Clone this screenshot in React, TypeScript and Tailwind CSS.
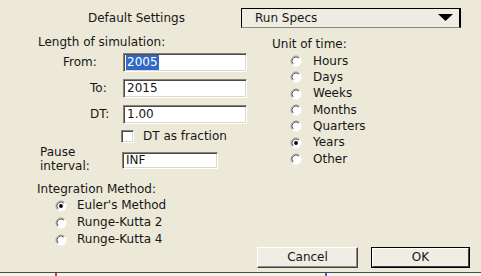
import React from "react";

function Radio({ checked = false }: { checked?: boolean }) {
  return (
    <svg width="12" height="12" viewBox="0 0 12 12" className="shrink-0">
      <circle cx="6" cy="6" r="5.5" fill="#ffffff" />
      <path d="M2.46 9.54 A5 5 0 1 1 9.54 2.46" stroke="#9a9890" strokeWidth="1" fill="none" />
      <path d="M3.17 8.83 A4 4 0 1 1 8.83 3.17" stroke="#5a5a58" strokeWidth="1" fill="none" />
      {checked && <circle cx="6" cy="6" r="1.9" fill="#000" />}
    </svg>
  );
}

function Field({ value, w, h, selected = false }: { value: string; w: string; h: string; selected?: boolean }) {
  return (
    <div
      className={`${w} ${h} bg-white border border-t-[#86837a] border-l-[#86837a] border-r-white border-b-white shadow-[inset_1px_1px_0_#4a4a4a,inset_-1px_-1px_0_#dcd9cc] flex items-center pl-[2px] leading-[15px]`}
    >
      {selected ? (
        <span className="bg-[#3169c6] text-white px-[1px]">{value}</span>
      ) : (
        <span className="px-[1px]">{value}</span>
      )}
    </div>
  );
}

export default function App() {
  return (
    <div className="w-[481px] h-[276px] bg-[#ece9d8] flex flex-col font-['DejaVu_Sans',sans-serif] text-[12px] text-[#161616] overflow-hidden">
      {/* top row */}
      <div className="mt-[8px] h-[20px] flex items-center">
        <div className="ml-[88px] w-[153px] leading-[15px]">Default Settings</div>
        <div className="w-[220px] h-[20px] bg-[#efede3] border-t border-l border-black border-r-2 border-r-black border-b border-b-[#8a877d] flex items-center justify-between pl-[13px] pr-[6px]">
          <span className="leading-[15px]">Run Specs</span>
          <svg width="15" height="8" viewBox="0 0 15 8">
            <polygon points="0,0 15,0 7.5,7" fill="#000" />
          </svg>
        </div>
      </div>

      {/* main */}
      <div className="mt-[7px] flex-1 flex">
        {/* left column */}
        <div className="w-[257px] flex flex-col">
          <div className="pl-[38px] leading-[15px]">Length of simulation:</div>
          <div className="mt-[3px] h-[19px] flex items-center">
            <div className="w-[123px] pl-[63px] leading-[15px]">From:</div>
            <Field value="2005" w="w-[124px]" h="h-[19px]" selected />
          </div>
          <div className="mt-[7px] h-[19px] flex items-center">
            <div className="w-[123px] pl-[90px] leading-[15px]">To:</div>
            <Field value="2015" w="w-[124px]" h="h-[19px]" />
          </div>
          <div className="mt-[7px] h-[19px] flex items-center">
            <div className="w-[123px] pl-[90px] leading-[15px]">DT:</div>
            <Field value="1.00" w="w-[124px]" h="h-[19px]" />
          </div>
          <div className="mt-[6px] h-[13px] flex items-center">
            <div className="ml-[121px] w-[13px] h-[13px] bg-white border border-t-[#86837a] border-l-[#86837a] border-r-white border-b-white shadow-[inset_1px_1px_0_#4a4a4a,inset_-1px_-1px_0_#dcd9cc]" />
            <span className="ml-[9px] leading-[15px]">DT as fraction</span>
          </div>
          <div className="mt-[2px] flex items-start">
            <div className="w-[122px] pl-[40px] leading-[14px]">
              <div>Pause</div>
              <div>interval:</div>
            </div>
            <div className="mt-[7px]">
              <Field value="INF" w="w-[96px]" h="h-[17px]" />
            </div>
          </div>
          <div className="mt-[9px] pl-[37px] leading-[15px]">Integration Method:</div>
          <div className="flex flex-col pl-[55px]">
            <div className="h-[17px] flex items-center gap-[10px]">
              <Radio checked />
              <span className="leading-[15px]">Euler's Method</span>
            </div>
            <div className="h-[17px] flex items-center gap-[10px]">
              <Radio />
              <span className="leading-[15px]">Runge-Kutta 2</span>
            </div>
            <div className="h-[17px] flex items-center gap-[10px]">
              <Radio />
              <span className="leading-[15px]">Runge-Kutta 4</span>
            </div>
          </div>
        </div>

        {/* right column */}
        <div className="flex-1 flex flex-col">
          <div className="mt-[2px] pl-[15px] leading-[15px]">Unit of time:</div>
          <div className="mt-[1px] flex flex-col pl-[33px]">
            {["Hours", "Days", "Weeks", "Months", "Quarters", "Years", "Other"].map((t) => (
              <div key={t} className="h-[16.33px] flex items-center gap-[11px]">
                <Radio checked={t === "Years"} />
                <span className="leading-[15px]">{t}</span>
              </div>
            ))}
          </div>
          <div className="mt-auto mb-[4px] flex items-center">
            <div className="w-[101px] h-[21px] bg-[#efede4] border border-t-white border-l-white border-r-[#404040] border-b-[#404040] shadow-[inset_-1px_-1px_0_#8e8c84] flex items-center justify-center leading-[15px]">
              Cancel
            </div>
            <div className="ml-[13px] w-[99px] h-[21px] border border-black bg-[#efede4] flex">
              <div className="flex-1 border border-t-white border-l-white border-r-[#404040] border-b-[#404040] flex items-center justify-center leading-[15px]">
                OK
              </div>
            </div>
          </div>
        </div>
      </div>

      {/* bottom strip */}
      <div className="h-[4px] border-t border-t-[#4e4d49] bg-[#f4f3ee] flex">
        <div className="ml-[55px] w-[2px] h-full bg-[#d43a3a]" />
        <div className="ml-[268px] w-[2px] h-full bg-[#5a5ad0]" />
      </div>
    </div>
  );
}
